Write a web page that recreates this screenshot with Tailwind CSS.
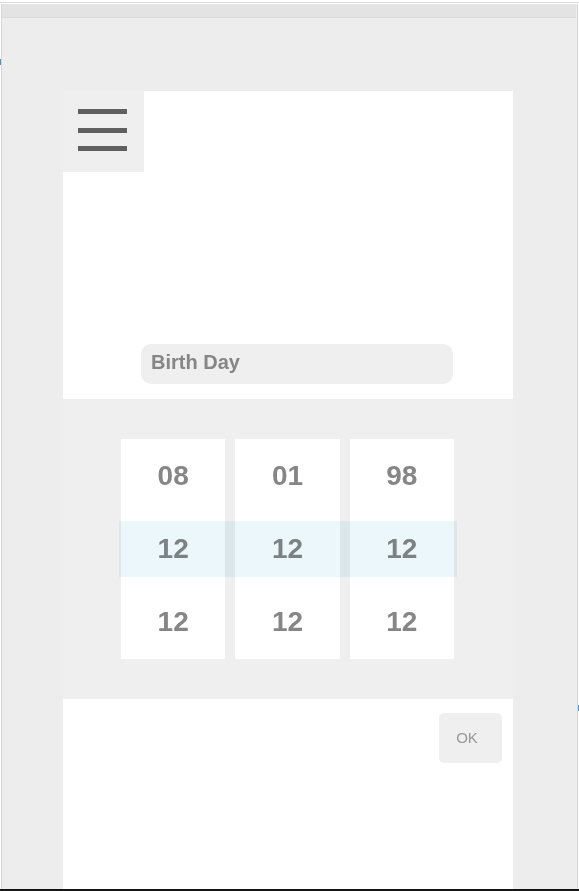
<!DOCTYPE html>
<html lang="en">
<head>
<meta charset="utf-8">
<meta name="viewport" content="width=device-width, initial-scale=1">
<title>Birth Day</title>
<script src="https://cdn.jsdelivr.net/npm/@tailwindcss/browser@4"></script>
</head>
<body class="relative flex min-h-screen flex-col border-b-2 border-[#151515] bg-white pt-0.5 font-['Liberation_Sans',Arial,sans-serif] text-[#868686]">
  <div class="mb-px h-px bg-[#d9d9d9]"></div>
  <div class="mx-px flex grow flex-col border-x border-[#d6d6d6] bg-[#ededed]">
    <div class="mr-px h-3.5 border-b border-[#d9d9d9] bg-[#e3e3e3]"></div>
    <main class="mt-[73px] mr-16 ml-[61px] flex grow flex-col bg-white">
      <button type="button" aria-label="Menu" class="size-[81px] bg-[#efefef] pb-1 pl-[15px]">
        <svg class="block h-[42px] w-[49px]" viewBox="0 0 49 42" fill="#606060" shape-rendering="crispEdges" aria-hidden="true">
          <rect width="49" height="5" y="0"/><rect width="49" height="5" y="19"/><rect width="49" height="5" y="37"/>
        </svg>
      </button>
      <input type="text" aria-label="Birth Day" value="Birth Day" class="mt-[172px] mr-[60px] ml-[78px] h-10 min-w-0 rounded-[10px] bg-[#efefef] px-2.5 pb-1 text-[20px] leading-6 font-bold outline-none">
      <section aria-label="Date picker" class="mt-[15px] bg-[#efefef] py-10 pr-14 pl-14">
        <div class="relative grid h-[220px] grid-cols-3 gap-2.5 pr-[3px] pl-0.5 text-center text-[28px] leading-8 font-bold">
          <div class="pointer-events-none absolute inset-x-0 top-[82px] z-10 h-14 bg-[#ecf7fb] mix-blend-multiply"></div>
          <ul aria-label="Month" class="grid grid-rows-3 items-center bg-white"><li>08</li><li>12</li><li>12</li></ul>
          <ul aria-label="Day" class="grid grid-rows-3 items-center bg-white"><li>01</li><li>12</li><li>12</li></ul>
          <ul aria-label="Year" class="grid grid-rows-3 items-center bg-white"><li>98</li><li>12</li><li>12</li></ul>
        </div>
      </section>
      <button type="button" class="mt-3.5 mr-[11px] h-[50px] w-[63px] self-end rounded-[5px] bg-[#efefef] pr-[7px] text-[15px] leading-5 text-[#999999]">OK</button>
    </main>
  </div>
  <span class="absolute top-[59px] left-0 h-1.5 w-px bg-[#4b91c0]" aria-hidden="true"></span>
  <span class="absolute top-[705px] right-0 h-1.5 w-px bg-[#4b9bd5]" aria-hidden="true"></span>
</body>
</html>
